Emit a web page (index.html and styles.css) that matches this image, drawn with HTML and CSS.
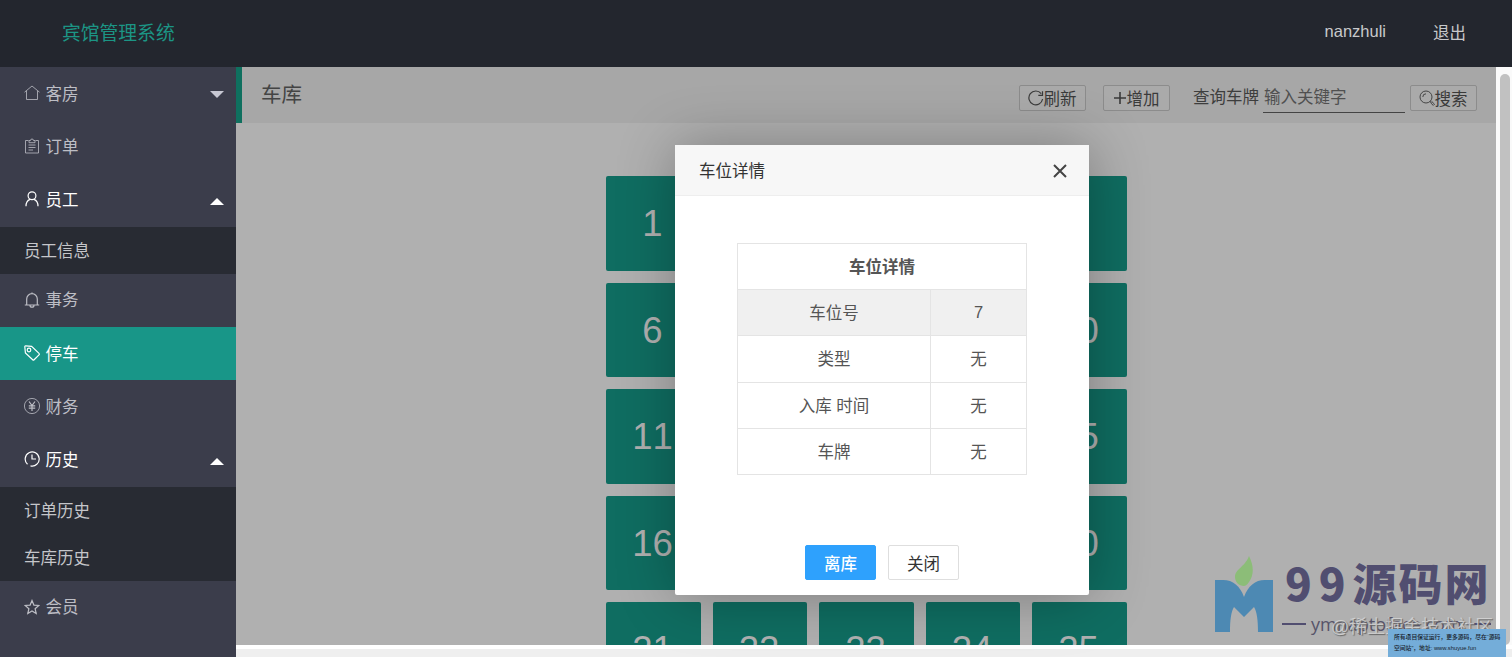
FILE: index.html
```html
<!DOCTYPE html>
<html lang="zh-CN">
<head>
    <meta charset="UTF-8">
    <meta name="viewport" content="width=device-width, initial-scale=1.0">
    <title>宾馆管理系统</title>
    <link rel="stylesheet" href="styles.css">
</head>
<body>
    <div class="header">
        <div class="logo">宾馆管理系统</div>
        <div class="header-nav">
            <a>nanzhuli</a>
            <a>退出</a>
        </div>
    </div>

    <div class="layout">
        <ul class="side">
            <li class="item">
                <svg class="icon thin" viewBox="0 0 16 16"><path d="M0.500 7.200L8 1l7.500 6.200M2.500 6v8.500h11V6"/></svg>
                <span>客房</span><i class="arrow down"></i>
            </li>
            <li class="item">
                <svg class="icon thin" viewBox="0 0 16 16"><path d="M4.500 2.500h-3v12.500h13V2.500h-3M5 2.500h1.500a1.500 1.500 0 0 1 3 0H11v2.200H5zM4.500 7h7M4.500 9.500h7M4.500 12h4.500"/></svg>
                <span>订单</span>
            </li>
            <li class="item open">
                <svg class="icon" viewBox="0 0 16 16"><circle cx="8" cy="4.700" r="3.900"/><path d="M2 15.200c0-3.300 1.500-5.800 4-6.800M14 15.200c0-3.300-1.500-5.800-4-6.800"/></svg>
                <span>员工</span><i class="arrow up"></i>
            </li>
            <li class="child">员工信息</li>
            <li class="item">
                <svg class="icon" viewBox="0 0 16 16"><path d="M0.800 13h14.400M2.700 13V7a5.300 5.300 0 0 1 10.600 0v6M8 2V0.500M6 13.200a2 2 0 0 0 4 0"/></svg>
                <span>事务</span>
            </li>
            <li class="item active">
                <svg class="icon" viewBox="0 0 16 16"><path d="M0.800 1.800l0.600 6.200 7.300 6.800a1 1 0 0 0 1.400 0l4.900-4.900a1 1 0 0 0 0-1.500L7.600 1.300 1.600 0.800a0.900 0.900 0 0 0-0.800 1z"/><circle cx="5" cy="5" r="1.800"/></svg>
                <span>停车</span>
            </li>
            <li class="item">
                <svg class="icon thin" viewBox="0 0 16 16"><circle cx="8" cy="8" r="7.600"/><path class="bold" d="M5 3.500l3 4 3-4M8 7.500v5.500M4.800 7.800h6.400M4.800 10.200h6.400"/></svg>
                <span>财务</span>
            </li>
            <li class="item open">
                <svg class="icon" viewBox="0 0 16 16"><path d="M3.500 13.200a7 7 0 1 1 3 1.600M8 3.500V8h4"/></svg>
                <span>历史</span><i class="arrow up"></i>
            </li>
            <li class="child">订单历史</li>
            <li class="child">车库历史</li>
            <li class="item">
                <svg class="icon" viewBox="0 0 16 16"><path d="M8 1.500l1.900 4.600 4.900 0.400-3.700 3.200 1.100 4.800L8 11.900l-4.200 2.600 1.100-4.800-3.700-3.200 4.900-0.400z"/></svg>
                <span>会员</span>
            </li>
        </ul>

        <div class="body">
            <div class="main">
                <div class="toolbar">
                    <h2>车库</h2>
                    <button class="tool-btn refresh">
                        <svg class="icon" viewBox="0 0 16 16"><path d="M14.600 9A6.900 6.900 0 1 1 13.200 3.600M14.500 1.200v4.200h-4.200"/></svg>刷新
                    </button>
                    <button class="tool-btn add">
                        <svg class="icon plus" viewBox="0 0 14 14"><path d="M7 1v12M1 7h12"/></svg>增加
                    </button>
                    <label class="search-label">查询车牌</label>
                    <input class="search-input" type="text" placeholder="输入关键字">
                    <button class="tool-btn">
                        <svg class="icon search" viewBox="0 0 16 16"><circle cx="7" cy="7" r="6"/><path d="M3.800 7A3.200 3.200 0 0 1 7 3.800M11.300 11.300l1 1M11.600 12.800l1.200-1.200 2.700 2.600-1.200 1.200z"/></svg>搜索
                    </button>
                </div>
                <div class="lots">
                    <div class="lot">1</div><div class="lot">2</div><div class="lot">3</div><div class="lot">4</div><div class="lot">5</div>
                    <div class="lot">6</div><div class="lot">7</div><div class="lot">8</div><div class="lot">9</div><div class="lot">10</div>
                    <div class="lot">11</div><div class="lot">12</div><div class="lot">13</div><div class="lot">14</div><div class="lot">15</div>
                    <div class="lot">16</div><div class="lot">17</div><div class="lot">18</div><div class="lot">19</div><div class="lot">20</div>
                    <div class="lot">21</div><div class="lot">22</div><div class="lot">23</div><div class="lot">24</div><div class="lot">25</div>
                </div>
            </div>
            <div class="scrollbar"><div class="thumb"></div></div>
            <div class="footer"></div>
        </div>
    </div>

    <!-- 车位详情弹窗 -->
    <div class="dialog">
        <div class="dialog-title">
            <span>车位详情</span>
            <svg class="close" viewBox="0 0 14 14"><path d="M1 1l12 12M13 1L1 13"/></svg>
        </div>
        <div class="dialog-content">
            <table class="detail">
                <colgroup><col class="name"><col></colgroup>
                <tr><th colspan="2">车位详情</th></tr>
                <tr class="hover"><td>车位号</td><td>7</td></tr>
                <tr><td>类型</td><td>无</td></tr>
                <tr><td>入库 时间</td><td>无</td></tr>
                <tr><td>车牌</td><td>无</td></tr>
            </table>
        </div>
        <div class="dialog-btns">
            <button class="btn primary">离库</button>
            <button class="btn">关闭</button>
        </div>
    </div>

    <!-- 水印 -->
    <div class="watermark">
        <svg class="mark-logo" viewBox="0 0 58 76">
            <path class="leaf" d="M34 0c5 10 5 19 0 26-2 3-4 4-5 4-5 0-9-4-9-9 0-8 10-10 14-21z"/>
            <path class="letter" d="M0 24h8c10 0 17 6 21 17 4-11 11-17 21-17h8v52H43c0-12-1-20-4-25l-10 10-10-10c-3 5-4 13-4 25H0z"/>
        </svg>
        <div class="mark-text">
            <div class="mark-name"><span class="num">99</span>源码网</div>
            <div class="mark-site"><i></i><span>ymnaptoface.com</span><i></i></div>
        </div>
    </div>
    <div class="community">@稀土掘金技术社区</div>
    <div class="notice">所有项目保证运行，更多源码，尽在“源码<br>空间站”，地址: www.shuyue.fun</div>
</body>
</html>
```
FILE: styles.css
```css
* {
    box-sizing: border-box;
}

body {
    margin: 0;
    height: 657px;
    overflow: hidden;
    position: relative;
    display: flex;
    flex-direction: column;
    font-family: "Liberation Sans", "Noto Sans CJK SC", sans-serif;
    font-size: 16.5px;
    color: #333;
}

button, input {
    font-family: inherit;
}

.header {
    height: 67px;
    flex: none;
    display: flex;
    justify-content: space-between;
    align-items: center;
    padding: 0 46px 4px 62px;
    background: #23262e;
}

.logo {
    padding-bottom: 1px;
    font-size: 18.8px;
    color: #1c9585;
}

.header-nav {
    display: flex;
    align-items: center;
    gap: 47px;
    color: #c8c9cb;
}

.layout {
    flex: 1;
    min-height: 0;
    display: flex;
}

.side {
    width: 236px;
    flex: none;
    margin: 0;
    padding: 0;
    list-style: none;
    background: #3b3d4b;
    color: #bdbec5;
    overflow: hidden;
}

.item {
    height: 53.2px;
    display: flex;
    align-items: center;
    padding: 0 12px 1px 24px;
}

.item span {
    padding-bottom: 1px;
}

.item.open {
    color: #fff;
}

.item.active {
    background: #189688;
    color: #fff;
}

.child {
    height: 47.2px;
    line-height: 49px;
    padding-left: 24px;
    background: #282b33;
    color: #c5c6ca;
}

.icon {
    width: 16px;
    height: 16px;
    flex: none;
    fill: none;
    stroke: currentColor;
    stroke-width: 1.2;
}

.item .icon {
    margin-right: 5.5px;
}

.icon.thin {
    stroke-width: 0.8;
}

.icon .bold {
    stroke-width: 1.2;
}

.arrow {
    margin-left: auto;
    border: 7px solid transparent;
}

.arrow.down {
    border-top-color: #c7c8d3;
    border-bottom: 0;
    margin-top: 3px;
}

.arrow.up {
    border-bottom-color: #fff;
    border-top: 0;
    margin-top: 4px;
}

.body {
    flex: 1;
    display: grid;
    grid-template-columns: 1fr 16px;
    grid-template-rows: 578px 12px;
}

.main {
    background: #b0b0b0;
    overflow: hidden;
}

.toolbar {
    height: 56px;
    display: flex;
    align-items: center;
    padding: 5px 19px 0 19px;
    border-left: 6px solid #0f705f;
    background: #a7a7a7;
}

.toolbar h2 {
    margin: 0 auto 9px 0;
    font-size: 20.5px;
    font-weight: normal;
    color: #444;
}

.tool-btn {
    width: 67px;
    height: 26px;
    display: flex;
    align-items: center;
    justify-content: center;
    padding: 0 1px 0 0;
    border: 1px solid #8c8c8c;
    border-radius: 2px;
    background: #aaa;
    font-size: 16.5px;
    color: #3a3a3a;
}

.refresh {
    margin-right: 17px;
}

.add {
    margin-right: 23px;
}

.icon.plus {
    width: 14px;
    height: 14px;
    stroke-width: 1.6;
}

.icon.search {
    stroke-width: 0.9;
}

.search-label {
    margin: 0 4px 3px 0;
    color: #3d3d3d;
}

.search-input {
    width: 142px;
    height: 31px;
    margin-right: 5px;
    padding: 0 0 0 1px;
    border: 0;
    border-bottom: 1px solid #444;
    background: none;
    font-size: 16.5px;
}

.search-input::placeholder {
    color: #505050;
}

.lots {
    display: grid;
    grid-template-columns: repeat(5, 94.5px);
    grid-auto-rows: 94.5px;
    gap: 12px;
    justify-content: center;
    padding: 53px 0 0 1px;
}

.lot {
    display: flex;
    align-items: center;
    justify-content: center;
    padding: 2px 2px 0 0;
    border-radius: 2px;
    background: #0f6d61;
    font-size: 36.5px;
    font-kerning: none;
    color: #b0b0b0;
}

.scrollbar {
    padding: 7px 2px 0 4px;
    background: #fafafa;
}

.thumb {
    height: 571px;
    border-radius: 5px;
    background: #c1c1c1;
}

.footer {
    grid-column: 1 / 3;
    border-top: 4px solid #fff;
    background: #efefef;
}

.dialog {
    position: absolute;
    left: 675px;
    top: 145px;
    width: 414px;
    height: 450px;
    display: flex;
    flex-direction: column;
    border-radius: 2px;
    background: #fff;
    box-shadow: 1px 1px 59px rgba(0, 0, 0, 0.3);
}

.dialog-title {
    height: 51px;
    display: flex;
    align-items: center;
    justify-content: space-between;
    padding: 0 22px 0 24px;
    border-bottom: 1px solid #eee;
    background: #f7f7f7;
}

.close {
    width: 14px;
    height: 14px;
    margin-top: 2px;
    fill: none;
    stroke: #444;
    stroke-width: 2;
}

.dialog-content {
    flex: 1;
    padding: 47px 62px 0;
}

.detail {
    width: 290px;
    border-collapse: collapse;
    table-layout: fixed;
    text-align: center;
    color: #555;
}

.detail th,
.detail td {
    height: 46.2px;
    padding: 0 0 1px;
    border: 1px solid #e4e4e4;
}

.detail .name {
    width: 193px;
}

.detail .hover {
    background: #f0f0f0;
}

.dialog-btns {
    display: flex;
    justify-content: center;
    gap: 12px;
    padding-bottom: 15px;
}

.btn {
    width: 71px;
    height: 35px;
    padding: 0;
    border: 1px solid #dedede;
    border-radius: 2px;
    background: #fff;
    font-size: 16.5px;
    color: #333;
}

.btn.primary {
    border-color: #2ea1fd;
    background: #2ea1fd;
    font-weight: 500;
    color: #fff;
}

.watermark {
    position: absolute;
    left: 1215px;
    top: 556px;
    display: flex;
    gap: 9px;
}

.mark-logo {
    width: 58px;
    height: 76px;
}

.leaf {
    fill: #8cbd78;
}

.letter {
    fill: #4d89b3;
}

.mark-name {
    height: 58px;
    line-height: 53px;
    padding-left: 3px;
    font-family: "Noto Sans CJK SC", sans-serif;
    font-size: 44px;
    font-weight: 900;
    letter-spacing: 2px;
    color: #514e70;
    white-space: nowrap;
}

.num {
    letter-spacing: 7px;
}

.mark-site {
    display: flex;
    align-items: center;
    gap: 5px;
    font-family: "Open Sans", sans-serif;
    font-size: 18px;
    line-height: 20px;
    color: #575469;
}

.mark-site i {
    width: 24px;
    height: 2px;
    background: #514e70;
}

.community {
    position: absolute;
    left: 1331px;
    top: 615px;
    font-size: 18px;
    line-height: 25px;
    color: rgba(220, 220, 220, 0.75);
    text-shadow: 1px 1px 1px #666;
    white-space: nowrap;
}

.notice {
    position: absolute;
    left: 1388px;
    top: 629px;
    width: 118px;
    height: 28px;
    padding: 3px 6px;
    background: #74add9;
    font-size: 5.8px;
    font-weight: 500;
    line-height: 11px;
    color: #18222c;
    white-space: nowrap;
}
```
